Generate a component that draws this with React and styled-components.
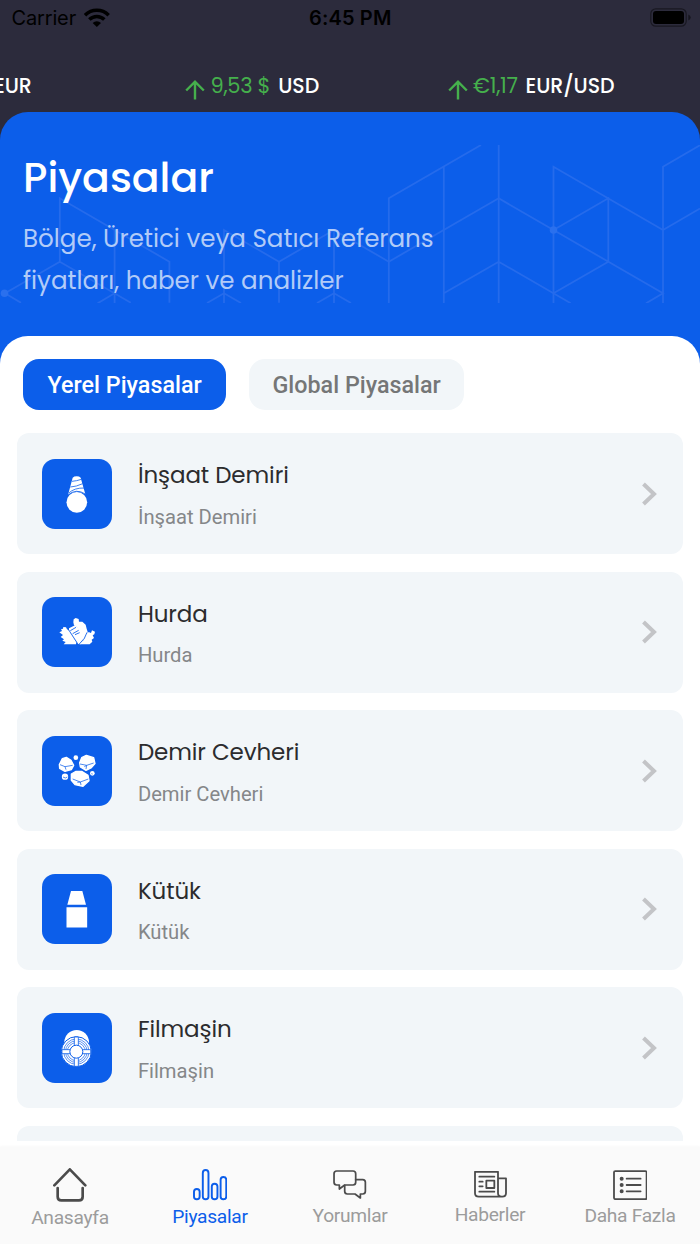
import React, { useState } from 'react';
import styled, { createGlobalStyle, css } from 'styled-components';

const GlobalStyle = createGlobalStyle`
  * {
    box-sizing: border-box;
  }
  body {
    margin: 0;
    background: #fff;
  }
  :root {
    --primary: #0c5eea;
    --dark: #2c2b3c;
    --card: #f2f6f9;
    --green: #45b04c;
    --heading: Poppins, Inter, sans-serif;
    --text: Roboto, sans-serif;
  }
`;

const RebarIcon = () => (
  <TileSvg viewBox="37 25 210 210">
    <path fill="#fff" d="M129 81q4-4 12-4t12 4l14 50-8-4q-18-9-36 1l-8 5z" />
    <g fill="none" stroke="#0c5eea" strokeWidth="2.4">
      <path d="M127 92q14-1 28-6" />
      <path d="M122 109q18-1 37-10" />
      <path d="M117 127q18-16 47-15" />
      <path d="M115 133q24-21 52-3" />
    </g>
    <circle cx="141.500" cy="155" r="31" fill="#fff" />
  </TileSvg>
);

const ScrapIcon = () => (
  <TileSvg viewBox="37 21 210 210">
    <g fill="#fff">
      <path d="M89 127l8-4-3-5 6-2 1-5 8 1 3 6 5 3 23 35-1 7h-37l6-7-10-4 5-4-10-7 7-6z" />
      <path d="M118 115l18-9 12 9 15 25 2 7-12 16-9-1-26-38z" />
      <path d="M131 97l1-9 6-4 9 3 1 8 10 0 10 9 3 12 4 13-8 14-4 2-21-34-9-5z" />
      <path d="M170 134l7-8 7 3 3-8 9 4-2 8-5 3 4 8-7 5 2 6-8 8h-30l12-12z" />
    </g>
    <g stroke="#0c5eea" strokeWidth="2.6" fill="none">
      <path d="M122 122l17-10M129 131l18-10M136 134l14-6" />
      <path d="M116 118l30 46M172 127l-8 18-16 18" />
    </g>
  </TileSvg>
);

const OreIcon = () => (
  <TileSvg viewBox="37 32 210 210">
    <g fill="#fff" stroke="#fff" strokeWidth="4" strokeLinejoin="round">
      <path d="M89 118l9-18 12-4 14 9 8 15-7 13-19 5-16-9z" />
      <path d="M150 112l6-15 14-7 22 7 4 18-12 13-15 7-17-10z" />
      <path d="M125 146l14-8 17 0 19 12 3 16-18 17-24-5-11-13z" />
    </g>
    <g fill="#fff">
      <circle cx="138.500" cy="97" r="7" />
      <circle cx="106" cy="154" r="9.500" />
      <circle cx="188" cy="144" r="7" />
    </g>
    <g fill="none" stroke="#0c5eea" strokeWidth="2.2">
      <path d="M91 118l15 6 23-4M106 124l3 9" />
      <path d="M151 116l20 4 21-7M171 120l-2 11M171 120l-7 4" />
      <path d="M129 161l23 9 24-9M152 170l2 9M152 170l-9 1" />
      <path d="M100 155l7 3 6-3M185 145l4 1" />
    </g>
  </TileSvg>
);

const BilletIcon = () => (
  <TileSvg viewBox="37 27 210 210">
    <path fill="#fff" d="M124 78h34l11 41h-56zM110.500 126.500h62v61h-62z" />
  </TileSvg>
);

const CoilIcon = () => (
  <TileSvg viewBox="37 29 210 210">
    <circle cx="141" cy="117" r="37" fill="#fff" />
    <circle cx="140" cy="145" r="45" fill="#fff" stroke="#0c5eea" strokeWidth="3" />
    <g fill="none" stroke="#0c5eea" strokeWidth="2">
      <circle cx="140" cy="145" r="38" />
      <circle cx="140" cy="145" r="32.500" />
      <circle cx="140" cy="145" r="27" />
    </g>
    <path
      fill="#fff"
      stroke="#0c5eea"
      strokeWidth="2.4"
      d="M134 101h12v38h37v12h-37v38h-12v-38H97v-12h37z"
    />
    <circle cx="140" cy="145" r="19.500" fill="#fff" stroke="#0c5eea" strokeWidth="3" />
  </TileSvg>
);

const HomeIcon = () => (
  <NavSvg viewBox="160 176 102 102" $w={34} $h={34} $stroke={8}>
    <path d="M164 228l46.500-48 46.500 48M174 236v26q0 11 11 11h53q11 0 11-11v-26" />
  </NavSvg>
);

const ChartIcon = () => (
  <NavSvg viewBox="579 178 104 94" $w={34.6} $h={31.4} $stroke={5.8}>
    <rect x="582" y="238" width="17" height="31" rx="8.500" />
    <rect x="608.500" y="181" width="17" height="88" rx="8.500" />
    <rect x="635.500" y="222" width="17" height="47" rx="8.500" />
    <rect x="662" y="202" width="17" height="67" rx="8.500" />
  </NavSvg>
);

const ChatIcon = () => (
  <NavSvg viewBox="999 183 100 87" $w={33.4} $h={29} $stroke={5.2}>
    <path d="M1010 186h49q8 0 8 8v26q0 8-8 8h-25l-16 12v-12h-8q-8 0-8-8v-26q0-8 8-8z" />
    <path d="M1067 212h21q8 0 8 8v27q0 8-8 8h-7v12l-16-12h-23q-8 0-8-8v-18" />
  </NavSvg>
);

const NewsIcon = () => (
  <NavSvg viewBox="371 187 99 80" $w={33} $h={26.7} $stroke={5.4}>
    <path d="M443 209h24v45q0 10-11 10h-71q-11 0-11-10v-64.500h69V253q0 11 11 11" />
    <path d="M387 204h45M387 219h10M387 233h10M387 249h45M408 216h24v22h-24z" />
  </NavSvg>
);

const MenuIcon = () => (
  <NavSvg viewBox="788 181 104 90" $w={34.6} $h={30} $stroke={5.4}>
    <rect x="791" y="184" width="98" height="84.500" rx="4" />
    <path d="M829 207h42M829 226h42M829 245h42" />
    <path strokeWidth="12" d="M814 207h.1M814 226h.1M814 245h.1" />
  </NavSvg>
);

const ArrowUp = () => (
  <ArrowSvg viewBox="0 0 20 20">
    <path d="M10 19.500V2M1.200 10.500L10 1.700l8.800 8.800" />
  </ArrowSvg>
);

const rates = [
  { name: 'EUR' },
  { value: '9,53 $', name: 'USD', valueSpacing: -0.3 },
  { value: '€1,17', name: 'EUR/USD', valueSpacing: -0.3 },
];

const markets = [
  { name: 'İnşaat Demiri', Icon: RebarIcon },
  { name: 'Hurda', Icon: ScrapIcon },
  { name: 'Demir Cevheri', Icon: OreIcon },
  { name: 'Kütük', Icon: BilletIcon },
  { name: 'Filmaşin', Icon: CoilIcon },
];

const navItems = [
  { label: 'Anasayfa', Icon: HomeIcon },
  { label: 'Piyasalar', Icon: ChartIcon, active: true },
  { label: 'Yorumlar', Icon: ChatIcon },
  { label: 'Haberler', Icon: NewsIcon },
  { label: 'Daha Fazla', Icon: MenuIcon },
];

function StatusBar() {
  return (
    <StatusWrapper>
      <Carrier>
        Carrier
        <svg width="26" height="19" viewBox="253 21 78 57">
          <g fill="none" stroke="#000" strokeWidth="10.500">
            <path d="M256 42.500a50 50 0 0 1 71 0" />
            <path d="M269 55.500a32 32 0 0 1 45 0" />
          </g>
          <path d="M279 66a17.500 17.500 0 0 1 25 0l-12.500 12z" />
        </svg>
      </Carrier>
      <Clock>6:45 PM</Clock>
      <Battery width="41" height="19" viewBox="0 0 41 19">
        <rect x=".8" y=".8" width="35.400" height="17.400" rx="5" fill="none" stroke="#000" strokeOpacity=".45" strokeWidth="1.200" />
        <rect x="3" y="3" width="31" height="13" rx="3" />
        <path d="M38.300 6.500q2.400 1 2.400 3t-2.400 3z" fillOpacity=".5" />
      </Battery>
    </StatusWrapper>
  );
}

function HexPattern() {
  return (
    <Pattern viewBox="0 145 700 157.500">
      <path d="M59.800 261.700V198.300l109.600 63.400v41M114.600 230v73M5 293.300l54.800-31.600 71 41M5 293.300l16 9.500M114.600 293.300l-17 10" />
      <path d="M224 303v-73l55 31.700 55-31.700 54.800 31.700L498.700 198.300l54.800 31.700M279 261.700v41M334 230v73M207 303l17-9.700 17 9.700M317 303l17-9.700 17 9.700" />
      <path d="M388.800 303V198.300L481 145M443.800 166.700V303M498.700 145v158M443.800 293.300l54.900-31.600 72 41.500" />
      <path d="M553.500 303V166.700L663 230l37-21.500M553.500 230l54.800-31.700v63.400l-54.800 31.600M553.500 230L663 293.300l-17 10M663 303V166.700l37-21.500" />
      <circle cx="4.500" cy="293.300" r="3.800" />
      <circle cx="553.500" cy="230" r="3.800" />
    </Pattern>
  );
}

function App() {
  const [tab, setTab] = useState('local');

  return (
    <Screen>
      <GlobalStyle />
      <StatusBar />
      <Ticker>
        {rates.map(({ value, name, valueSpacing }) => (
          <Rate key={name} $cut={!value}>
            {value && <ArrowUp />}
            {value && <RateValue $spacing={valueSpacing}>{value}</RateValue>}
            <span>{name}</span>
          </Rate>
        ))}
      </Ticker>
      <Hero>
        <HexPattern />
        <Title>Piyasalar</Title>
        <Subtitle>
          Bölge, Üretici veya Satıcı Referans
          <br />
          fiyatları, haber ve analizler
        </Subtitle>
      </Hero>
      <Sheet>
        <Panel>
          <Tabs>
            <Tab $active={tab === 'local'} onClick={() => setTab('local')}>
              Yerel Piyasalar
            </Tab>
            <Tab $wide $active={tab === 'global'} onClick={() => setTab('global')}>
              Global Piyasalar
            </Tab>
          </Tabs>
          <List>
            {markets.map(({ name, Icon }) => (
              <Card key={name}>
                <Tile>
                  <Icon />
                </Tile>
                <CardText>
                  <CardTitle>{name}</CardTitle>
                  <CardSub>{name}</CardSub>
                </CardText>
                <Chevron viewBox="0 0 16 24">
                  <path d="M2.500 2l10.500 10L2.500 22" />
                </Chevron>
              </Card>
            ))}
            <Card />
          </List>
        </Panel>
      </Sheet>
      <BottomNav>
        {navItems.map(({ label, Icon, active }) => (
          <NavItem key={label} $active={active}>
            <Icon />
            <NavLabel>{label}</NavLabel>
          </NavItem>
        ))}
      </BottomNav>
    </Screen>
  );
}

const Screen = styled.div`
  display: flex;
  flex-direction: column;
  width: 700px;
  height: 1244px;
  overflow: hidden;
  background: var(--dark);
  font-family: var(--text);
`;

const StatusWrapper = styled.header`
  display: grid;
  grid-template-columns: 1fr auto 1fr;
  align-items: center;
  height: 36px;
  flex-shrink: 0;
  padding: 0 9px 1px 11.500px;
  font-family: Inter, sans-serif;
  font-size: 20px;
  color: #000;
`;

const Carrier = styled.div`
  display: flex;
  align-items: center;
  gap: 8px;
  letter-spacing: -0.15px;
`;

const Clock = styled.div`
  margin-right: 2px;
  font-weight: 600;
  letter-spacing: 0.15px;
`;

const Battery = styled.svg`
  justify-self: end;
`;

const Ticker = styled.div`
  display: grid;
  grid-template-columns: 185px 262.500px 1fr;
  align-items: center;
  height: 76px;
  flex-shrink: 0;
  padding-top: 23px;
  overflow: hidden;
`;

const Rate = styled.div`
  display: flex;
  align-items: center;
  margin-left: ${({ $cut }) => ($cut ? '-6px' : '0')};
  font-family: var(--heading);
  font-size: 20.500px;
  font-weight: 500;
  letter-spacing: -0.1px;
  color: #fff;
`;

const RateValue = styled.span`
  margin: 0 8px 0 5.500px;
  font-size: 21px;
  font-weight: 400;
  color: var(--green);
  letter-spacing: ${({ $spacing }) => $spacing}px;
`;

const ArrowSvg = styled.svg`
  width: 20px;
  height: 20px;
  margin-top: 9px;
  fill: none;
  stroke: var(--green);
  stroke-width: 2.4;
`;

const Hero = styled.section`
  position: relative;
  height: 224px;
  flex-shrink: 0;
  padding: 36px 23px 0;
  border-radius: 28px 28px 0 0;
  background: var(--primary);
  font-family: var(--heading);
`;

const Pattern = styled.svg`
  position: absolute;
  top: 33px;
  left: 0;
  width: 700px;
  height: 157.5px;
  fill: none;
  stroke: #256bec;
  stroke-width: 1.8;
  circle {
    fill: #2a70ee;
    stroke: none;
  }
`;

const Title = styled.h1`
  position: relative;
  margin: 0;
  font-size: 41px;
  font-weight: 500;
  line-height: 60px;
  color: #fff;
`;

const Subtitle = styled.p`
  position: relative;
  margin: 10px 0 0;
  font-size: 24.600px;
  line-height: 42px;
  letter-spacing: -0.02px;
  white-space: nowrap;
  color: #b2cbf8;
`;

const Sheet = styled.main`
  flex: 1;
  min-height: 0;
  background: linear-gradient(var(--primary) 60px, #fff 60px);
`;

const Panel = styled.div`
  height: 100%;
  padding: 23px 17px 6px;
  border-radius: 28px 28px 0 0;
  background: #fff;
  display: flex;
  flex-direction: column;
`;

const Tabs = styled.div`
  display: flex;
  gap: 23px;
  padding-left: 6.400px;
  flex-shrink: 0;
`;

const Tab = styled.button`
  width: ${({ $wide }) => ($wide ? '215.5px' : '202.5px')};
  height: 50.500px;
  padding: 2px 0 0 0;
  border: 0;
  border-radius: 16px;
  background: var(--card);
  font-family: var(--text);
  font-size: 23.300px;
  font-weight: 500;
  color: #757677;
  white-space: nowrap;
  ${({ $active }) =>
    $active &&
    css`
      background: var(--primary);
      color: #fff;
    `}
`;

const List = styled.div`
  display: flex;
  flex-direction: column;
  gap: 17.500px;
  flex: 1;
  min-height: 0;
  margin-top: 23.500px;
  overflow: hidden;
`;

const Card = styled.div`
  display: flex;
  align-items: center;
  height: 121.100px;
  flex-shrink: 0;
  padding: 0 26.500px 0 25.400px;
  border-radius: 12px;
  background: var(--card);
`;

const Tile = styled.div`
  width: 70px;
  height: 70px;
  border-radius: 13px;
  background: var(--primary);
`;

const TileSvg = styled.svg`
  display: block;
  width: 70px;
  height: 70px;
`;

const CardText = styled.div`
  flex: 1;
  padding: 1.500px 0 0 25.500px;
`;

const CardTitle = styled.div`
  font-family: var(--heading);
  font-size: 23px;
  line-height: 36px;
  letter-spacing: -0.1px;
  color: #2c2c2e;
`;

const CardSub = styled.div`
  margin-top: 8.500px;
  font-size: 20.200px;
  line-height: 30px;
  color: #858789;
`;

const Chevron = styled.svg`
  width: 16px;
  height: 24px;
  fill: none;
  stroke: #c3c4c7;
  stroke-width: 4;
`;

const BottomNav = styled.nav`
  display: grid;
  grid-template-columns: repeat(5, 1fr);
  height: 97px;
  flex-shrink: 0;
  padding-top: 7px;
  background: #fafafa;
  box-shadow: 0 0 3px rgba(0, 0, 0, 0.05);
`;

const NavItem = styled.div`
  display: flex;
  flex-direction: column;
  align-items: center;
  justify-content: center;
  gap: 4.400px;
  color: ${({ $active }) => ($active ? 'var(--primary)' : '#9c9c9c')};
  svg {
    stroke: ${({ $active }) => ($active ? 'var(--primary)' : '#4b4b4b')};
  }
`;

const NavSvg = styled.svg`
  width: ${({ $w }) => $w}px;
  height: ${({ $h }) => $h}px;
  fill: none;
  stroke-width: ${({ $stroke }) => $stroke};
  stroke-linecap: round;
  stroke-linejoin: round;
`;

const NavLabel = styled.span`
  font-size: 19.200px;
  line-height: 24px;
  letter-spacing: -0.3px;
`;

export default App;
